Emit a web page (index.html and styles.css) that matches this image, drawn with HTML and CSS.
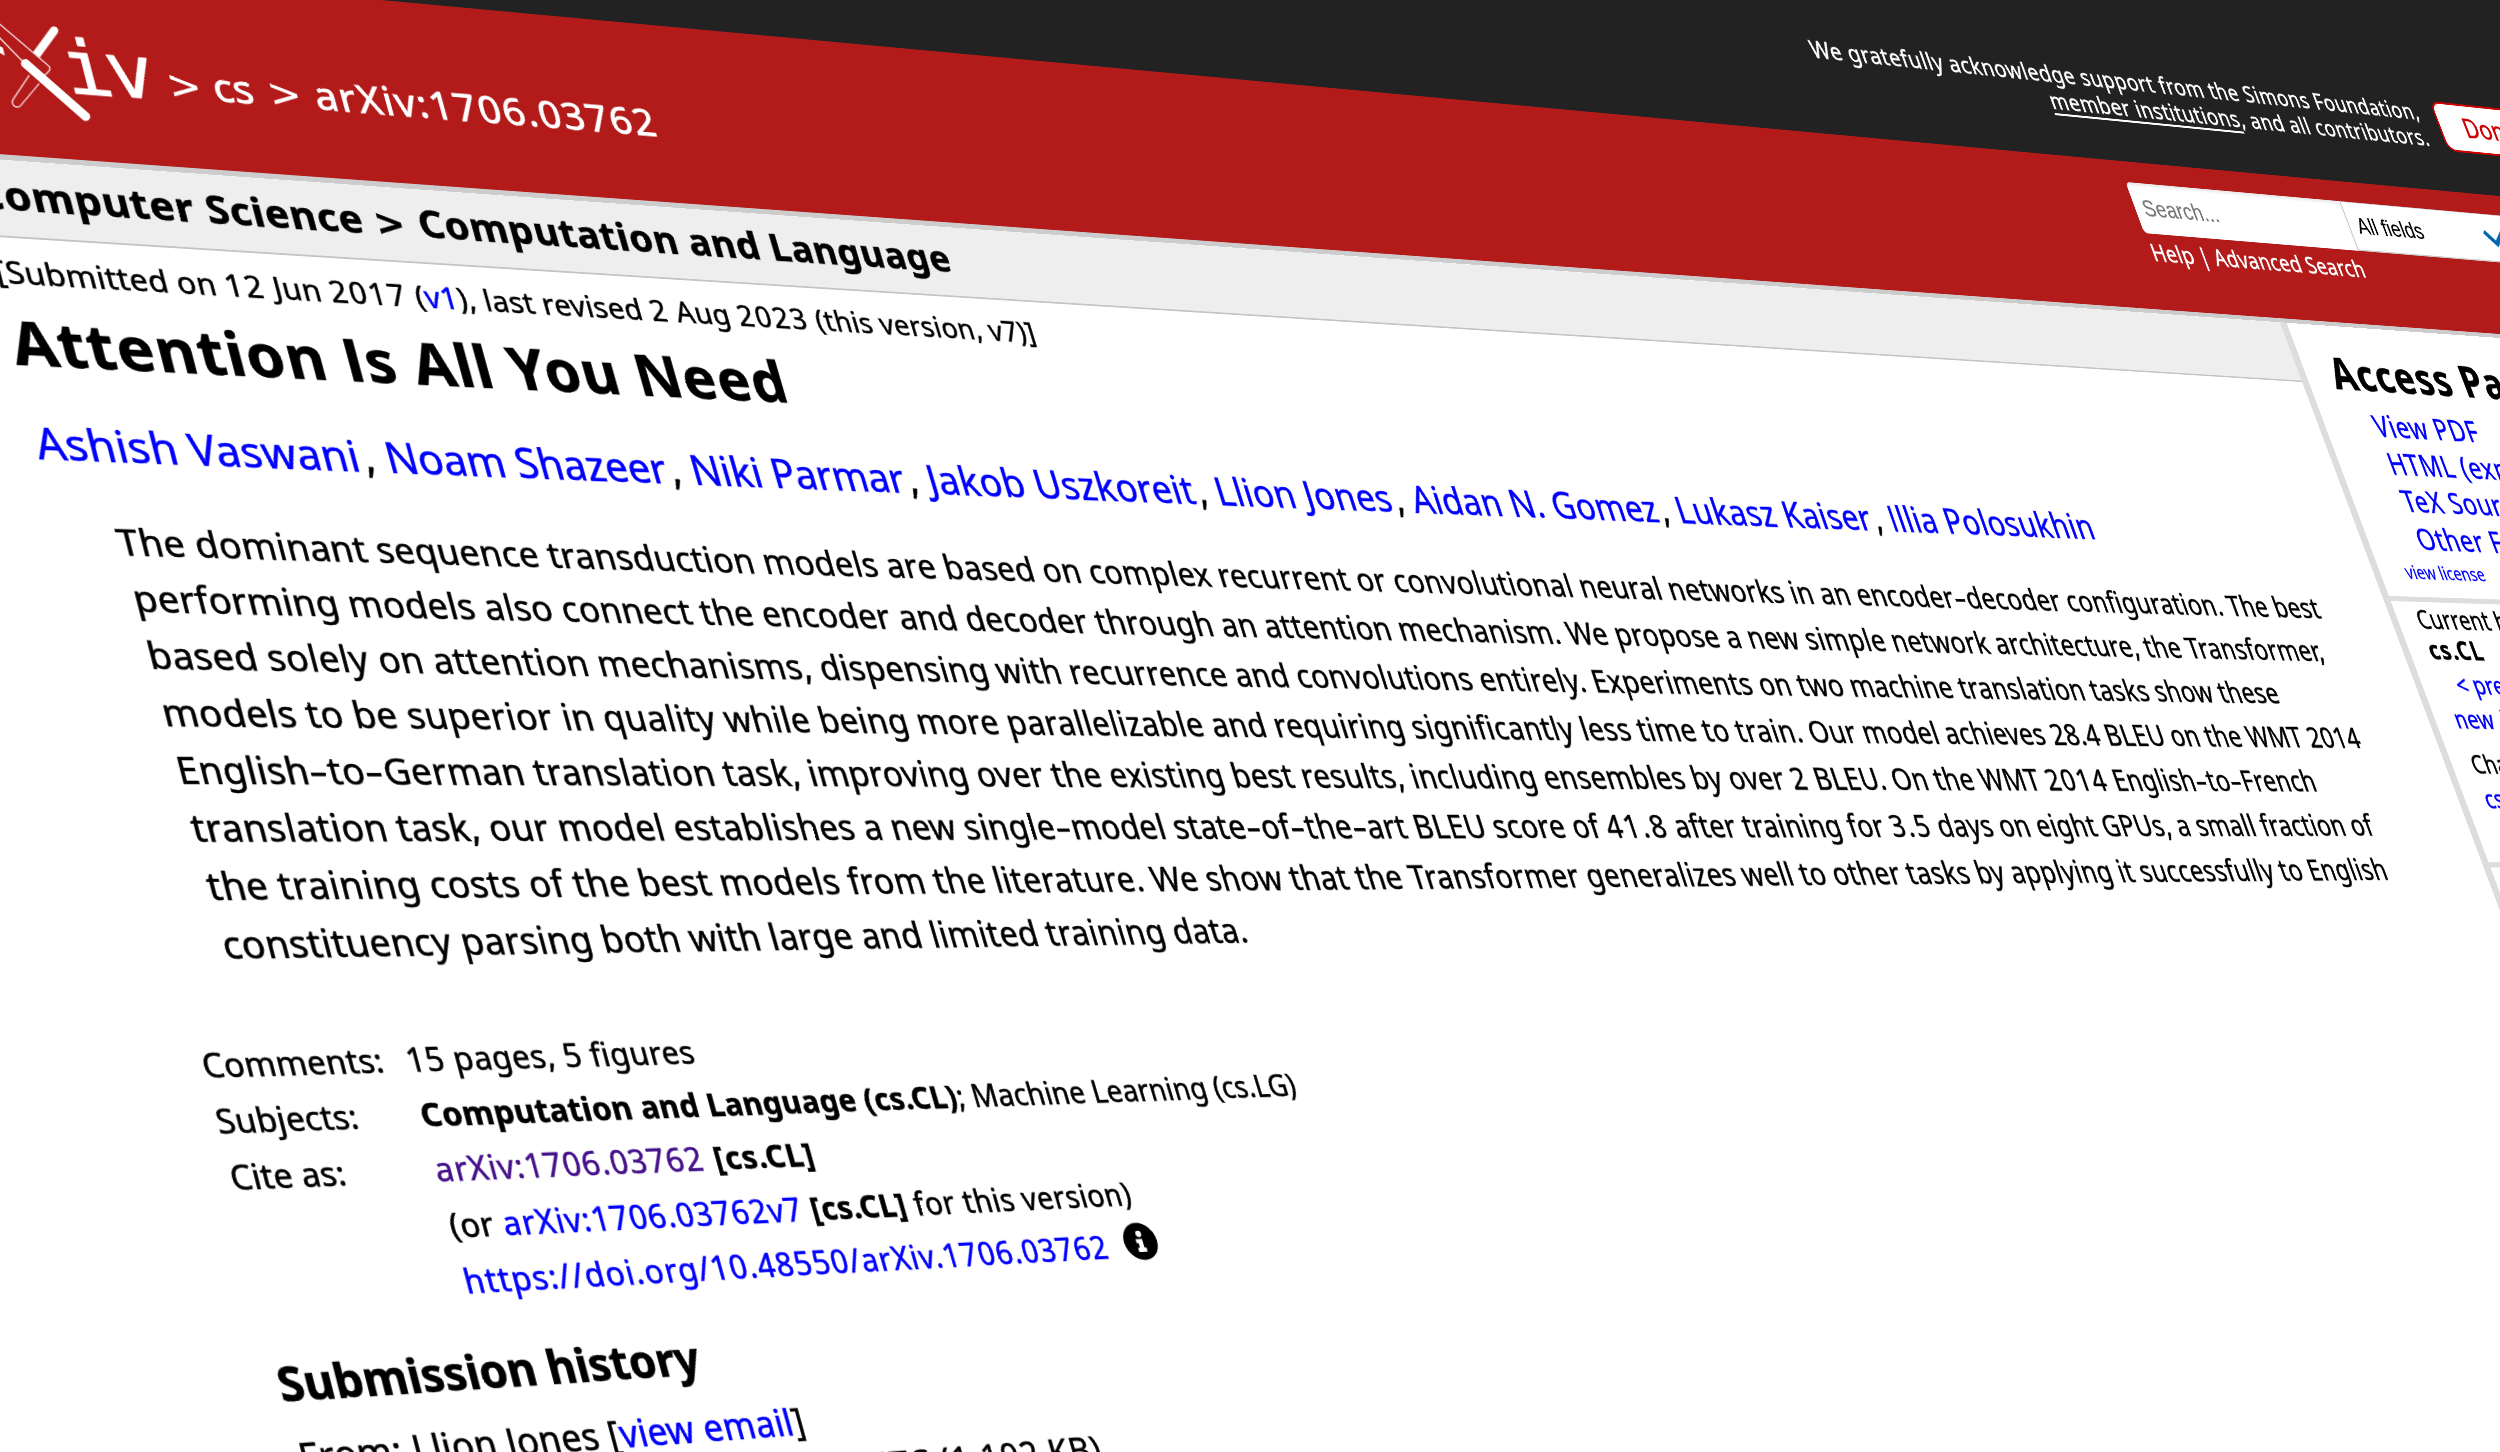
FILE: index.html
```html
<!DOCTYPE html>
<html lang="en">
<head>
<meta charset="utf-8">
<title>[1706.03762] Attention Is All You Need</title>
<link rel="stylesheet" href="styles.css">
</head>
<body>
<div class="page">
  <div class="topbar">
    <p class="support">We gratefully acknowledge support from the Simons Foundation,<br><a href="#">member institutions</a>, and all contributors.</p>
    <a class="donate" href="#">Donate</a>
  </div>

  <header class="banner">
    <svg class="logo" viewBox="0 0 276 210" width="276" height="210" aria-label="arXiv">
      <g transform="matrix(.3457 -.0314 -.0888 .3721 125.2 39.6)">
        <path class="solid" stroke-width="26" d="M162 92L108 166"/>
        <path class="outline" d="M88 225L40 297Q34 309 44 317Q55 324 63 315L118 250"/>
        <path class="outline" d="M-60 22L144 196Q154 205 147 213L128 232L62 178L-60 52"/>
        <path class="solid" stroke-width="26" d="M76 190L258 350"/>
      </g>
      <text x="118" y="136" text-anchor="end">ar</text>
      <text x="172" y="136">i</text>
      <text x="217" y="136">v</text>
    </svg>
    <nav class="crumbs">
      <span class="sep">&gt;</span><a href="#">cs</a><span class="sep">&gt;</span><span class="ident">arXiv:1706.03762</span>
    </nav>
    <form class="search">
      <div class="fields">
        <div class="query">Search...</div>
        <div class="scope">All fields
          <svg width="44" height="30" viewBox="0 0 44 30"><path d="M5 6L22 23L39 6"/></svg>
        </div>
      </div>
      <p class="help"><a href="#">Help</a> | <a href="#">Advanced Search</a></p>
    </form>
  </header>

  <div class="columns">
    <main>
      <h2 class="subject">Computer Science <span class="sep">&gt;</span> <span>Computation and Language</span></h2>
      <div class="dateline">[Submitted on <b>12</b> Jun <b>2017</b> (<a href="#">v1</a>), last revised <b>2</b> Aug <b>2023</b> (this version, v7)]</div>
      <h1>Attention <span class="cap">I</span>s All You Need</h1>
      <div class="authors"><a href="#">Ashish Vaswani</a>, <a class="snug" href="#">Noam Shazeer</a>, <a class="snug" href="#">Niki Parmar</a>, <a href="#">Jakob Uszkoreit</a>, <a href="#">Llion Jones</a>, <a href="#">Aidan N. Gomez</a>, <a href="#">Lukasz Kaiser</a>, <a href="#"><span class="cap">I</span>llia Polosukhin</a></div>
      <blockquote class="abstract">
        <span class="l1">The dominant sequence transduction models are based on complex recurrent or convolutional neural networks in an encoder<i>-</i>decoder configuration. The best</span>
        <span class="l2">performing models also connect the encoder and decoder through an attention mechanism. We propose a new simple network architecture, the Transformer,</span>
        <span class="l3">based solely on attention mechanisms, dispensing with recurrence and convolutions entirely. Experiments on two machine translation tasks show these</span>
        <span class="l4">models to be superior in quality while being more parallelizable and requiring significantly less time to train. <span class="tight">Our model achieves <b>28.4</b> BLEU on the WMT <b>2014</b></span></span>
        <span class="l5">English<i>-</i>to<i>-</i>German translation task, improving over the existing best results, including ensembles by over <b>2</b> BLEU. On the WMT <b>2014</b> English<i>-</i>to<i>-</i>French</span>
        <span class="l6">translation task, our model establishes a new single<i>-</i>model state<i>-</i>of<i>-</i>the<i>-</i>art BLEU score of <b>41.8</b> after training for <b>3.5</b> days on eight GPUs, a small fraction of</span>
        <span class="l7">the training costs of the best models from the literature. We show that the Transformer generalizes well to other tasks by applying it successfully to English</span>
        <span class="l8">constituency parsing both with large and limited training data.</span>
      </blockquote>
      <dl class="meta">
        <dt>Comments:</dt><dd class="m1">15 pages, 5 figures</dd>
        <dt>Subjects:</dt><dd class="m2"><strong>Computation and Language (cs.CL)</strong>; Machine Learning (cs.LG)</dd>
        <dt>Cite as:</dt><dd class="m3"><a class="visited" href="#">arXiv:1706.03762</a> <strong>[cs.CL]</strong></dd>
        <dt></dt><dd class="m4">(or <a href="#">arXiv:1706.03762v7</a> <strong>[cs.CL]</strong> for this version)</dd>
        <dt></dt><dd class="m5"><a href="#">https://doi.org/10.48550/arXiv.1706.03762</a><svg class="info" width="39" height="40" viewBox="0 0 512 512"><path fill-rule="evenodd" d="M256 0a256 256 0 1 0 0 512a256 256 0 1 0 0-512zM256 108a44 44 0 1 1 0 88a44 44 0 1 1 0-88zM190 222h100v120h30v58H190v-58h30v-62h-30z"/></svg></dd>
      </dl>
      <section class="history">
        <h2>Submission history</h2>
        <p>From: Llion Jones [<a href="#">view email</a>]</p>
        <p class="version"><strong><a href="#">[v1]</a></strong> Mon, 12 Jun 2017 17:57:34 UTC (1,102 KB)</p>
      </section>
    </main>

    <aside>
      <section class="access">
        <h2>Access Paper:</h2>
        <ul>
          <li><a href="#">View PDF</a></li>
          <li><a href="#">HTML (experimental)</a></li>
          <li><a href="#">TeX Source</a></li>
          <li><a href="#">Other Formats</a></li>
        </ul>
        <a class="license" href="#">view license</a>
      </section>
      <section class="browse">
        <p>Current browse context:</p>
        <p class="context">cs.CL</p>
        <p class="nav prev"><a href="#">&lt; prev</a></p>
        <p class="nav"><a href="#">new</a> | <a href="#">recent</a></p>
        <p class="nav change">Change to browse by:</p>
        <p class="nav"><a href="#">cs</a></p>
      </section>
      <section></section>
    </aside>
  </div>
</div>
</body>
</html>
```

FILE: styles.css
```css
* { box-sizing: border-box; }

html, body {
  margin: 0;
  width: 100%;
  height: 100%;
  overflow: hidden;
  background: #fff;
}

body {
  color: #000;
  font-family: "Noto Sans", "Open Sans", sans-serif;
  white-space: nowrap;
  -webkit-text-stroke: .6px;
}

h1, h2, p, ul, dl, dd, blockquote { margin: 0; padding: 0; }
ul { list-style: none; }
a { color: #00f; text-decoration: none; }
.cap { font-family: "Open Sans", sans-serif; }
.sep { font-family: "DejaVu Sans", sans-serif; }

/* The whole document is tilted away; the pivot is the top of the red banner. */
.page {
  width: 4600px;
  margin-top: -400px;
  transform-origin: 0 400px;
  transform: matrix3d(
    1.001549, .088833, 0, .000108864,
    .234614, .924025, 0, -.000051349,
    0, 0, 1, 0,
    -134.6, -47.7, 0, 1);
}

/* Support bar */
.topbar {
  display: flex;
  height: 400px;
  padding-top: 262px;
  background: #222;
}
.support {
  width: 3515px;
  color: #fff;
  font-size: 32.7px;
  line-height: 39.3px;
  letter-spacing: .82px;
  text-align: right;
}
.support a {
  color: #fff;
  text-decoration: underline;
  text-decoration-thickness: 3px;
  text-underline-offset: 6px;
}
.donate {
  height: 75px;
  margin: 1px 0 0 30px;
  padding: 0 44px;
  border: 3px solid #c00;
  border-radius: 16px;
  background: #fff;
  color: #c00;
  font-size: 40px;
  line-height: 66px;
}

/* Banner */
.banner {
  display: flex;
  height: 210px;
  background: #b31b1b;
  color: #fff;
}
.logo { flex: none; overflow: visible; }
.logo text {
  fill: #fff;
  stroke: #fff;
  stroke-width: 1;
  stroke-linejoin: round;
  font-family: "DejaVu Sans Mono", monospace;
  font-size: 82px;
}
.solid { stroke: #fff; stroke-linecap: round; fill: none; }
.outline { stroke: #f3dcdc; stroke-width: 4; fill: #b31b1b; }
.crumbs {
  display: grid;
  grid-template-columns: 47.5px 58.5px 49.5px auto;
  align-items: baseline;
  height: 60px;
  margin: 85.5px 0 0 2px;
  font-size: 44px;
  line-height: 60px;
  -webkit-text-stroke: 1px;
}
.crumbs a { color: #fff; }
.crumbs .sep { font-size: 42px; -webkit-text-stroke: .4px; }
.ident { letter-spacing: 1.9px; }
.search { width: 1679px; margin-left: auto; padding-top: 30px; }
.fields {
  display: flex;
  height: 72px;
  font-family: "Liberation Sans", Arial, sans-serif;
  font-size: 32.5px;
  line-height: 73px;
  -webkit-text-stroke: .2px;
}
.query {
  width: 377px;
  padding-left: 14px;
  border-radius: 7px 0 0 7px;
  background: #fff;
  color: #757575;
  box-shadow: inset 0 3px 4px rgba(0, 0, 0, .1);
}
.scope {
  display: flex;
  align-items: center;
  justify-content: space-between;
  width: 320px;
  padding: 0 24px 0 14px;
  border: solid #ccc;
  border-width: 1px 2px 2px;
  border-radius: 0 7px 7px 0;
  background: #fff;
  color: #000;
}
.scope svg { fill: none; stroke: #0068ac; stroke-width: 7; }
.help {
  margin-top: 7px;
  font-size: 32.7px;
  line-height: 40px;
  letter-spacing: .3px;
}
.help a { color: #fff; }

.columns {
  display: grid;
  grid-template-columns: 3104px 1fr;
  border-top: 6px solid #ccc;
}

/* Main column */
.subject {
  height: 84px;
  padding-left: 50px;
  border-bottom: 2.4px solid #c4c4c4;
  background: #eee;
  font-size: 43px;
  line-height: 76px;
  letter-spacing: .85px;
}
.subject .sep {
  display: inline-block;
  width: 36px;
  font-size: 39px;
}
.dateline {
  margin: 17px 0 0 50px;
  font-size: 32.7px;
  line-height: 40px;
  letter-spacing: .4px;
}
.dateline b { font-weight: 400; letter-spacing: 2.1px; }
h1 {
  margin: 14.6px 0 0 49px;
  font-size: 64px;
  line-height: 77px;
  letter-spacing: 1.4px;
}
.authors {
  margin: 39px 0 0 48px;
  font-size: 45px;
  line-height: 56px;
  letter-spacing: .37px;
}
.authors .snug { letter-spacing: -.12px; }
.authors a:not(:last-child) { margin-right: 3.5px; }
.abstract {
  display: grid;
  margin: 42.8px 0 0 106.5px;
  font-size: 38px;
  line-height: 58px;
}
.abstract b { font-weight: 400; letter-spacing: 2.4px; }
.abstract i {
  display: inline-block;
  padding: 0 3.5px;
  font-style: normal;
  transform: scaleX(1.5);
}
.l1 { margin-left: -1.5px; letter-spacing: .32px; }
.l2 { letter-spacing: .3px; }
.l3 { letter-spacing: .34px; }
.l4 { letter-spacing: .44px; }
.l4 .tight, .l4 .tight b { letter-spacing: .28px; }
.l5 { letter-spacing: .37px; }
.l6 { letter-spacing: .35px; }
.l7 { margin-left: 1px; letter-spacing: .43px; }
.l8 { margin-left: 1.5px; letter-spacing: .33px; }

.meta {
  display: grid;
  grid-template-columns: 202px auto;
  margin: 61.5px 0 0 59px;
  font-size: 32.7px;
  line-height: 54.2px;
}
.meta dt { letter-spacing: .2px; }
.meta a { letter-spacing: 1.1px; }
.meta .visited { color: #45108a; }
.m1 { letter-spacing: .6px; }
.m2 { letter-spacing: .15px; }
.m2 strong { letter-spacing: .4px; }
.m3 { letter-spacing: 1.1px; }
.m3 strong { margin-left: 2px; }
.m4 { letter-spacing: .6px; }
.m5 a { letter-spacing: 1.3px; }
.info { margin-left: 20px; vertical-align: -4px; }

.history h2 {
  margin: 29px 0 0 55px;
  font-size: 45px;
  line-height: 60px;
  letter-spacing: -.15px;
}
.history p {
  margin: 0 0 0 58px;
  font-size: 36px;
  line-height: 53px;
  letter-spacing: .42px;
}
.history h2 + p { margin-top: 12px; }
.history .version { margin-top: -4px; letter-spacing: 1.2px; }

/* Sidebar */
aside { border-left: 12px solid #ddd; }
aside section { padding-left: 35px; border-bottom: 7px solid #ddd; }
.access { height: 387px; padding-top: 32px; }
.access h2 {
  margin-left: 11px;
  font-size: 62px;
  line-height: 70px;
  letter-spacing: 1.9px;
}
.access ul {
  margin: 12px 0 0 54px;
  font-size: 41.5px;
  line-height: 52.7px;
  letter-spacing: 1.3px;
}
.license {
  display: block;
  margin: 3px 0 0 11px;
  font-size: 25.5px;
  line-height: 34px;
  -webkit-text-stroke: .3px;
}
.browse { height: 360px; padding-top: 2px; }
.browse p { font-size: 35.5px; line-height: 42px; letter-spacing: .3px; }
.browse .context { font-weight: 700; letter-spacing: 2px; }
.browse .nav { font-size: 35px; line-height: 46.5px; }
.browse .prev { margin: 4px 0 0 26px; }
.browse .change { margin-top: 15px; }
aside section:last-child { border: 0; }
```
